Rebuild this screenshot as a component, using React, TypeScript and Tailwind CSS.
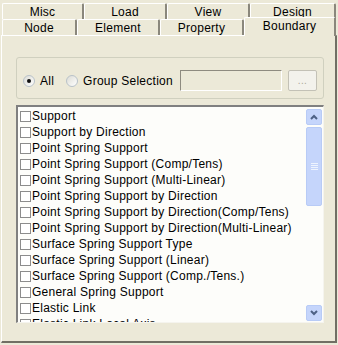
import React from 'react';

const topTabs = [
  { label: 'Misc', w: 'w-[82px]' },
  { label: 'Load', w: 'w-[83px]' },
  { label: 'View', w: 'w-[83px]' },
  { label: 'Design', w: 'w-[86px]' },
];

const frontTabs = [
  { label: 'Node', w: 'w-[75px]' },
  { label: 'Element', w: 'w-[83px]' },
  { label: 'Property', w: 'w-[84px]' },
];

const items = [
  'Support',
  'Support by Direction',
  'Point Spring Support',
  'Point Spring Support (Comp/Tens)',
  'Point Spring Support (Multi-Linear)',
  'Point Spring Support by Direction',
  'Point Spring Support by Direction(Comp/Tens)',
  'Point Spring Support by Direction(Multi-Linear)',
  'Surface Spring Support Type',
  'Surface Spring Support (Linear)',
  'Surface Spring Support (Comp./Tens.)',
  'General Spring Support',
  'Elastic Link',
  'Elastic Link Local Axis',
];

function Radio({ checked }: { checked?: boolean }) {
  return (
    <span className="w-[12px] h-[12px] rounded-full border border-[#B9C2C9] bg-gradient-to-br from-[#DCDCD5] to-white flex items-center justify-center">
      {checked && <span className="w-[4px] h-[4px] rounded-full bg-[#111]" />}
    </span>
  );
}

function Tab({ label, w }: { label: string; w: string }) {
  return (
    <div
      className={`${w} h-[16px] border-t border-l border-white border-r-2 border-r-[#8A877C] rounded-t-[2px] flex items-center justify-center leading-none`}
    >
      {label}
    </div>
  );
}

export default function App() {
  return (
    <div
      className="w-[338px] h-[345px] bg-[#ECE9D8] text-black text-[12px] tracking-[0.25px] overflow-hidden"
      style={{ fontFamily: '"Liberation Sans", Arial, sans-serif' }}
    >
      {/* tab rows */}
      <div className="pt-[3px] pl-[2px]">
        <div className="flex">
          {topTabs.map((t) => (
            <Tab key={t.label} {...t} />
          ))}
        </div>
        <div className="flex items-end h-[16px]">
          {frontTabs.map((t) => (
            <Tab key={t.label} {...t} />
          ))}
          <div className="w-[92px] h-[19px] -mb-[1px] relative z-10 bg-[#ECE9D8] border-t border-l border-white border-r-2 border-r-[#8A877C] rounded-t-[2px] flex items-start justify-center pt-[2px] leading-none">
            Boundary
          </div>
        </div>
      </div>

      {/* panel */}
      <div className="ml-[1px] w-[336px] h-[308px] border-t border-l border-white border-r-2 border-b-2 border-r-[#716F64] border-b-[#716F64] pt-[21px] pl-[14px]">
        <div className="w-[308px] h-[42px] border border-[#D0D0BF] rounded-[3px] flex items-center pl-[6px] pt-[5px]">
          <Radio checked />
          <span className="ml-[5px]">All</span>
          <span className="ml-[12px]">
            <Radio />
          </span>
          <span className="ml-[5px]">Group Selection</span>
          <div className="ml-[7px] w-[102px] h-[21px] border border-t-[#8E8B80] border-l-[#8E8B80] border-r-white border-b-white bg-[#ECE9D8]" />
          <div className="ml-[6px] w-[29px] h-[21px] border border-[#C3C1B6] rounded-[2px] bg-[#F3F2EC] text-[#ACA899] flex items-center justify-center text-[10px] leading-none">
            ...
          </div>
        </div>

        <div className="mt-[6px] w-[308px] h-[218px] border-t-2 border-l-2 border-t-[#808080] border-l-[#808080] border-r border-b border-r-[#F5F4EE] border-b-[#F5F4EE] bg-[#FDFDFA] flex overflow-hidden">
          <div className="flex-1 pt-[1px] overflow-hidden">
            {items.map((it) => (
              <div key={it} className="h-[16px] flex items-center whitespace-nowrap">
                <span className="ml-[2px] w-[11px] h-[11px] border border-[#8C8C8C] bg-white shrink-0" />
                <span className="ml-[1px]">{it}</span>
              </div>
            ))}
          </div>
          <div className="w-[16px] mr-[1px] pt-[2px] pb-[1px] flex flex-col">
            <div className="h-[16px] rounded-[2px] border border-[#B8CBF6] bg-[#C5D5FB] flex items-center justify-center">
              <svg width="8" height="6" viewBox="0 0 8 6">
                <path d="M1 5 L4 2 L7 5" stroke="#4D6185" strokeWidth="2" fill="none" />
              </svg>
            </div>
            <div className="mt-[2px] h-[79px] rounded-[2px] border border-[#B8CBF6] bg-[#C5D5FB] flex flex-col items-center justify-center gap-[1px]">
              <span className="w-[7px] h-[1px] bg-[#EEF4FE]" />
              <span className="w-[7px] h-[1px] bg-[#EEF4FE]" />
              <span className="w-[7px] h-[1px] bg-[#EEF4FE]" />
              <span className="w-[7px] h-[1px] bg-[#EEF4FE]" />
            </div>
            <div className="flex-1" />
            <div className="h-[16px] rounded-[2px] border border-[#B8CBF6] bg-[#C5D5FB] flex items-center justify-center">
              <svg width="8" height="6" viewBox="0 0 8 6">
                <path d="M1 1 L4 4 L7 1" stroke="#4D6185" strokeWidth="2" fill="none" />
              </svg>
            </div>
          </div>
        </div>
      </div>
    </div>
  );
}
